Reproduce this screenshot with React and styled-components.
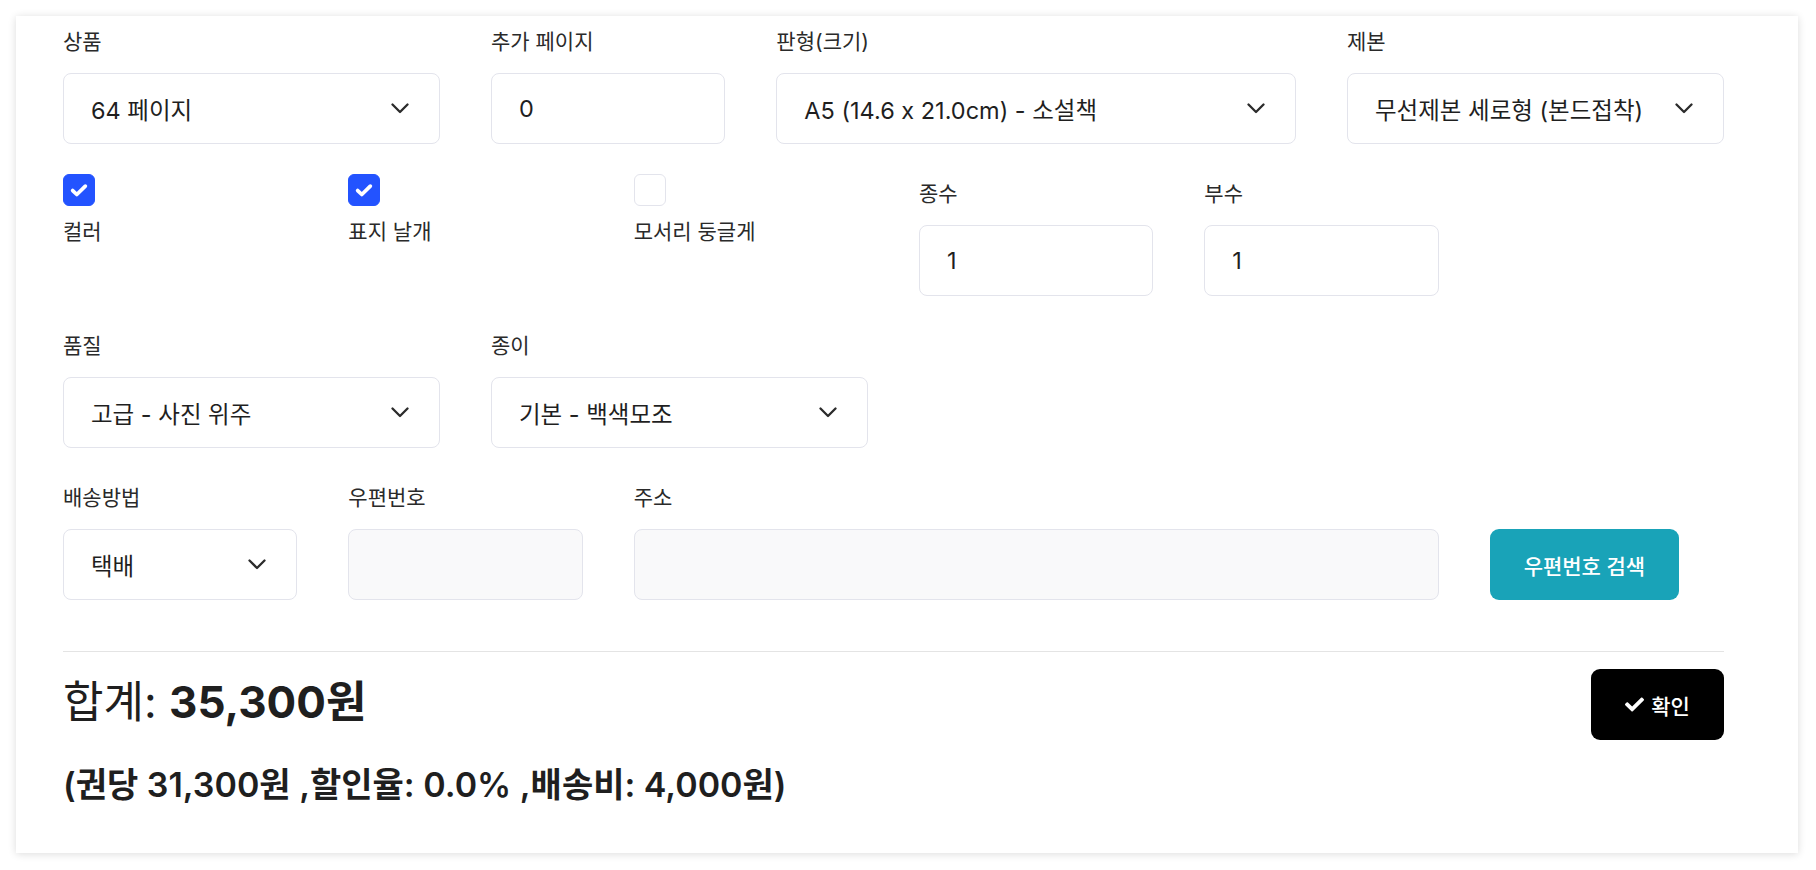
import React from 'react'
import styled, { createGlobalStyle } from 'styled-components'
import { FaCheck } from 'react-icons/fa'

const GlobalStyle = createGlobalStyle`
	* { box-sizing: border-box; }
	html, body {
		margin: 0;
		padding: 0;
		background: #fff;
		font-family: Inter, "Noto Sans CJK KR", sans-serif;
		font-feature-settings: "calt" 0;
		color: #1f1f1f;
	}
`

const Chevron = () => (
	<svg width="18" height="11" viewBox="0 0 18 11" fill="none">
		<path d="M1.5 1.5L9 9l7.5-7.5" stroke="#2b2b2b" strokeWidth="2.3" strokeLinecap="round" strokeLinejoin="round" />
	</svg>
)

const Tick = () => (
	<svg width="22" height="22" viewBox="0 0 16 16" fill="none">
		<path d="M3.4 8.4l3 2.9L12.6 5.2" stroke="#fff" strokeWidth="2.7" strokeLinecap="round" strokeLinejoin="round" />
	</svg>
)

const SelectField = ({ label, value, span }) => (
	<Group span={span}>
		<Label>{label}</Label>
		<Control>
			<span>{value}</span>
			<Chevron />
		</Control>
	</Group>
)

const InputField = ({ label, value, span, disabled }) => (
	<Group span={span}>
		<Label>{label}</Label>
		<Control disabled={disabled}>{value}</Control>
	</Group>
)

const CheckField = ({ label, checked }) => (
	<CheckGroup>
		<Box checked={checked}>{checked && <Tick />}</Box>
		<CheckLabel>{label}</CheckLabel>
	</CheckGroup>
)

const App = () => {
	return (
		<Page>
			<GlobalStyle />
			<Card>
				<Grid>
					<SelectField label="상품" value="64 페이지" span={3} />
					<InputField label="추가 페이지" value="0" span={2} />
					<SelectField label="판형(크기)" value="A5 (14.6 x 21.0cm) - 소설책" span={4} />
					<SelectField label="제본" value="무선제본 세로형 (본드접착)" span={3} />

					<CheckField label="컬러" checked />
					<CheckField label="표지 날개" checked />
					<CheckField label="모서리 둥글게" />
					<InputField label="종수" value="1" span={2} />
					<InputField label="부수" value="1" span={2} />
					<Spacer span={2} />

					<SelectField label="품질" value="고급 - 사진 위주" span={3} />
					<SelectField label="종이" value="기본 - 백색모조" span={3} />
					<Spacer span={6} />

					<SelectField label="배송방법" value="택배" span={2} />
					<InputField label="우편번호" span={2} disabled />
					<InputField label="주소" span={6} disabled />
					<Group span={2}>
						<Label>&nbsp;</Label>
						<SearchButton>우편번호 검색</SearchButton>
					</Group>
				</Grid>

				<Divider />

				<TotalRow>
					<Total>합계: <strong>35,300원</strong></Total>
					<ConfirmButton><FaCheck size={19} />확인</ConfirmButton>
				</TotalRow>
				<Detail>(권당 31,300원 ,할인율: 0.0% ,배송비: 4,000원)</Detail>
			</Card>
		</Page>
	)
}

export default App

const Page = styled.div`
	padding: 16px 18px 17px 16px;
`

const Card = styled.div`
	background: #fff;
	box-shadow: 0 1px 8px rgba(0, 0, 0, 0.14);
	padding: 12px 74px 47px 47px;
`

const Grid = styled.div`
	display: grid;
	grid-template-columns: repeat(12, 1fr);
	column-gap: 51px;
	row-gap: 36px;
`

const Group = styled.div`
	grid-column: span ${p => p.span};
	display: flex;
	flex-direction: column;
	align-items: flex-start;
`

const CheckGroup = styled.div`
	grid-column: span 2;
	display: flex;
	flex-direction: column;
	align-items: flex-start;
	margin-top: -6px;
`

const Spacer = styled.div`
	grid-column: span ${p => p.span};
`

const Label = styled.div`
	font-size: 21px;
	line-height: 28px;
	color: #2a2a2a;
	margin-bottom: 17px;
	white-space: nowrap;
`

const Control = styled.div`
	width: 100%;
	height: 71px;
	border: 1px solid #e3e4ec;
	border-radius: 8px;
	background: ${p => (p.disabled ? '#f9f9fa' : '#fff')};
	padding: 0 30px 0 27px;
	display: flex;
	align-items: center;
	justify-content: space-between;
	font-size: 23.5px;
	color: #1f1f1f;
	white-space: nowrap;
`

const Box = styled.div`
	width: 32px;
	height: 32px;
	border-radius: 6px;
	background: ${p => (p.checked ? '#2353ff' : '#fff')};
	border: 1px solid ${p => (p.checked ? '#2353ff' : '#e3e4ec')};
	display: flex;
	align-items: center;
	justify-content: center;
`

const CheckLabel = styled.div`
	font-size: 21px;
	line-height: 28px;
	color: #2a2a2a;
	margin-top: 12px;
`

const SearchButton = styled.button`
	height: 71px;
	padding: 0 34px;
	border: none;
	border-radius: 9px;
	background: #19a3b8;
	color: #fff;
	font-family: inherit;
	font-size: 21px;
	font-weight: 500;
	white-space: nowrap;
`

const Divider = styled.hr`
	border: none;
	border-top: 1px solid #e4e4e4;
	margin: 51px 0 14px;
`

const TotalRow = styled.div`
	display: flex;
	align-items: flex-start;
	justify-content: space-between;
`

const Total = styled.div`
	font-size: 44px;
	line-height: 1.2;
	padding-top: 10px;
	color: #1f1f1f;

	strong {
		font-weight: 700;
	}
`

const ConfirmButton = styled.button`
	height: 71px;
	width: 133px;
	margin-top: 3px;
	border: none;
	border-radius: 9px;
	background: #000;
	color: #fff;
	font-family: inherit;
	font-size: 21px;
	font-weight: 500;
	display: flex;
	align-items: center;
	justify-content: center;
	gap: 7px;
`

const Detail = styled.div`
	font-size: 34px;
	line-height: 1.2;
	font-weight: 600;
	color: #1f1f1f;
	margin-top: 25px;
`
